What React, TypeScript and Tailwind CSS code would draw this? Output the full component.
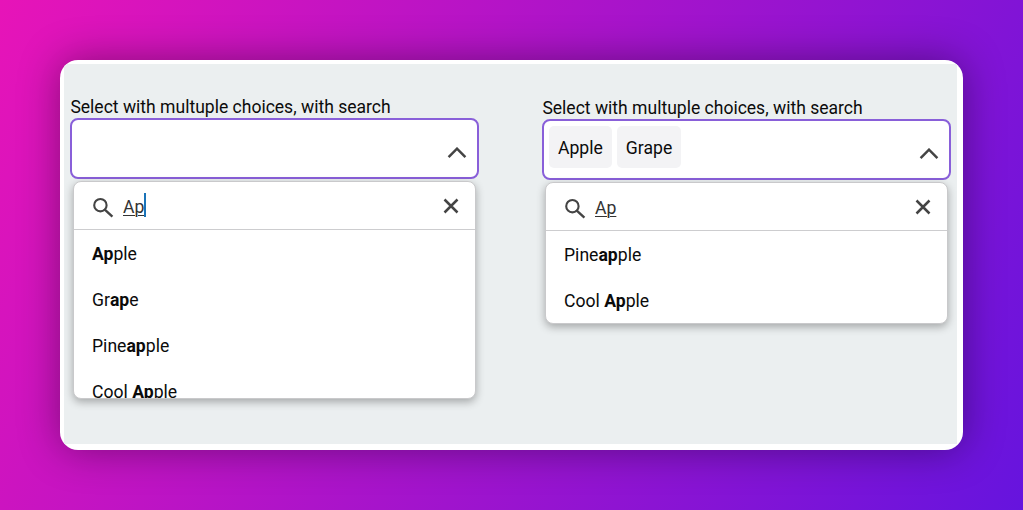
import type { ReactNode } from "react";

const LABEL = "Select with multuple choices, with search";

function SearchIcon() {
  return (
    <svg className="mt-[4px] h-[22px] w-[22px] shrink-0" viewBox="0 0 22 22" fill="none" stroke="#444" strokeWidth="2.1">
      <circle cx="8.4" cy="8.2" r="6.2" />
      <path d="M12.8 12.6L20.4 19.6" strokeWidth="2.4" />
    </svg>
  );
}

function ChevronUp() {
  return (
    <svg className="h-3 w-5" viewBox="0 0 20 12" fill="none" stroke="#444" strokeWidth="2.5">
      <path d="M1.6 10.1L10 1.7L18.4 10.1" />
    </svg>
  );
}

function CloseIcon() {
  return (
    <svg className="h-4 w-4" viewBox="0 0 16 16" fill="none" stroke="#444" strokeWidth="2.5">
      <path d="M1.5 1.5L14.5 14.5M14.5 1.5L1.5 14.5" />
    </svg>
  );
}

function Match({ text, query }: { text: string; query: string }) {
  const at = text.toLowerCase().indexOf(query.toLowerCase());
  return (
    <>
      {text.slice(0, at)}
      <b className="font-bold">{text.slice(at, at + query.length)}</b>
      {text.slice(at + query.length)}
    </>
  );
}

function Chip({ children }: { children: ReactNode }) {
  return (
    <span className="flex h-[42px] items-center rounded-[5px] bg-[#f3f3f5] px-[9px] pt-[3px] text-[17.6px]">
      {children}
    </span>
  );
}

interface SelectProps {
  chosen: string[];
  options: string[];
  caret?: boolean;
  menuHeight: string;
}

function MultiSelect({ chosen, options, caret, menuHeight }: SelectProps) {
  return (
    <div className="w-[409px]">
      <div className="h-[22px] pl-[0.4px] text-[17.54px] leading-[23px] whitespace-nowrap">{LABEL}</div>
      <div className="flex h-[61px] justify-between rounded-[8px] border-[2px] border-[#895fd9] bg-white pr-[10px] pl-[5px]">
        <div className="flex gap-[5px] pt-[5px]">
          {chosen.map((c) => (
            <Chip key={c}>{c}</Chip>
          ))}
        </div>
        <div className="pt-[27px]">
          <ChevronUp />
        </div>
      </div>
      <div
        className={`mx-[3px] mt-[2px] overflow-hidden rounded-[8px] border border-[#c9c9cb] bg-white shadow-[0_3px_8px_rgba(0,0,0,0.3)] ${menuHeight}`}
      >
        <div className="flex h-[48px] items-center border-b border-[#cdcdcf] pr-[16px] pl-[18px]">
          <SearchIcon />
          <div className="ml-[9px] flex flex-1 items-center text-[17.6px] text-[#333]">
            <span className="pt-[3px] underline decoration-1 underline-offset-2">Ap</span>
            {caret && <span className="h-[24px] w-[2px] bg-[#1a73b8]" />}
          </div>
          <CloseIcon />
        </div>
        <ul>
          {options.map((o) => (
            <li key={o} className="flex h-[46px] items-center pt-[2px] pl-[18px]">
              <span className="whitespace-pre">
                <Match text={o} query="Ap" />
              </span>
            </li>
          ))}
        </ul>
      </div>
    </div>
  );
}

export default function App() {
  return (
    <div className="h-[510px] w-[1023px] overflow-hidden bg-[linear-gradient(118deg,#e714b8_0%,#6614de_100%)] p-[60px] font-['Roboto',sans-serif] text-[17.6px] text-[#0b0b0b]">
      <div className="h-[390px] w-[903px] overflow-hidden rounded-[18px] bg-white pt-[4px] pr-[6px] pb-[6px] pl-[4px] shadow-[0_0_40px_rgba(0,0,0,0.38)]">
        <div className="flex h-[380px] gap-[63px] bg-[#ebeff0] pt-[32px] pl-[6px]">
          <MultiSelect chosen={[]} options={["Apple", "Grape", "Pineapple", "Cool Apple"]} caret menuHeight="h-[218px]" />
          <div className="pt-px">
            <MultiSelect chosen={["Apple", "Grape"]} options={["Pineapple", "Cool Apple"]} menuHeight="h-[142px]" />
          </div>
        </div>
      </div>
    </div>
  );
}
